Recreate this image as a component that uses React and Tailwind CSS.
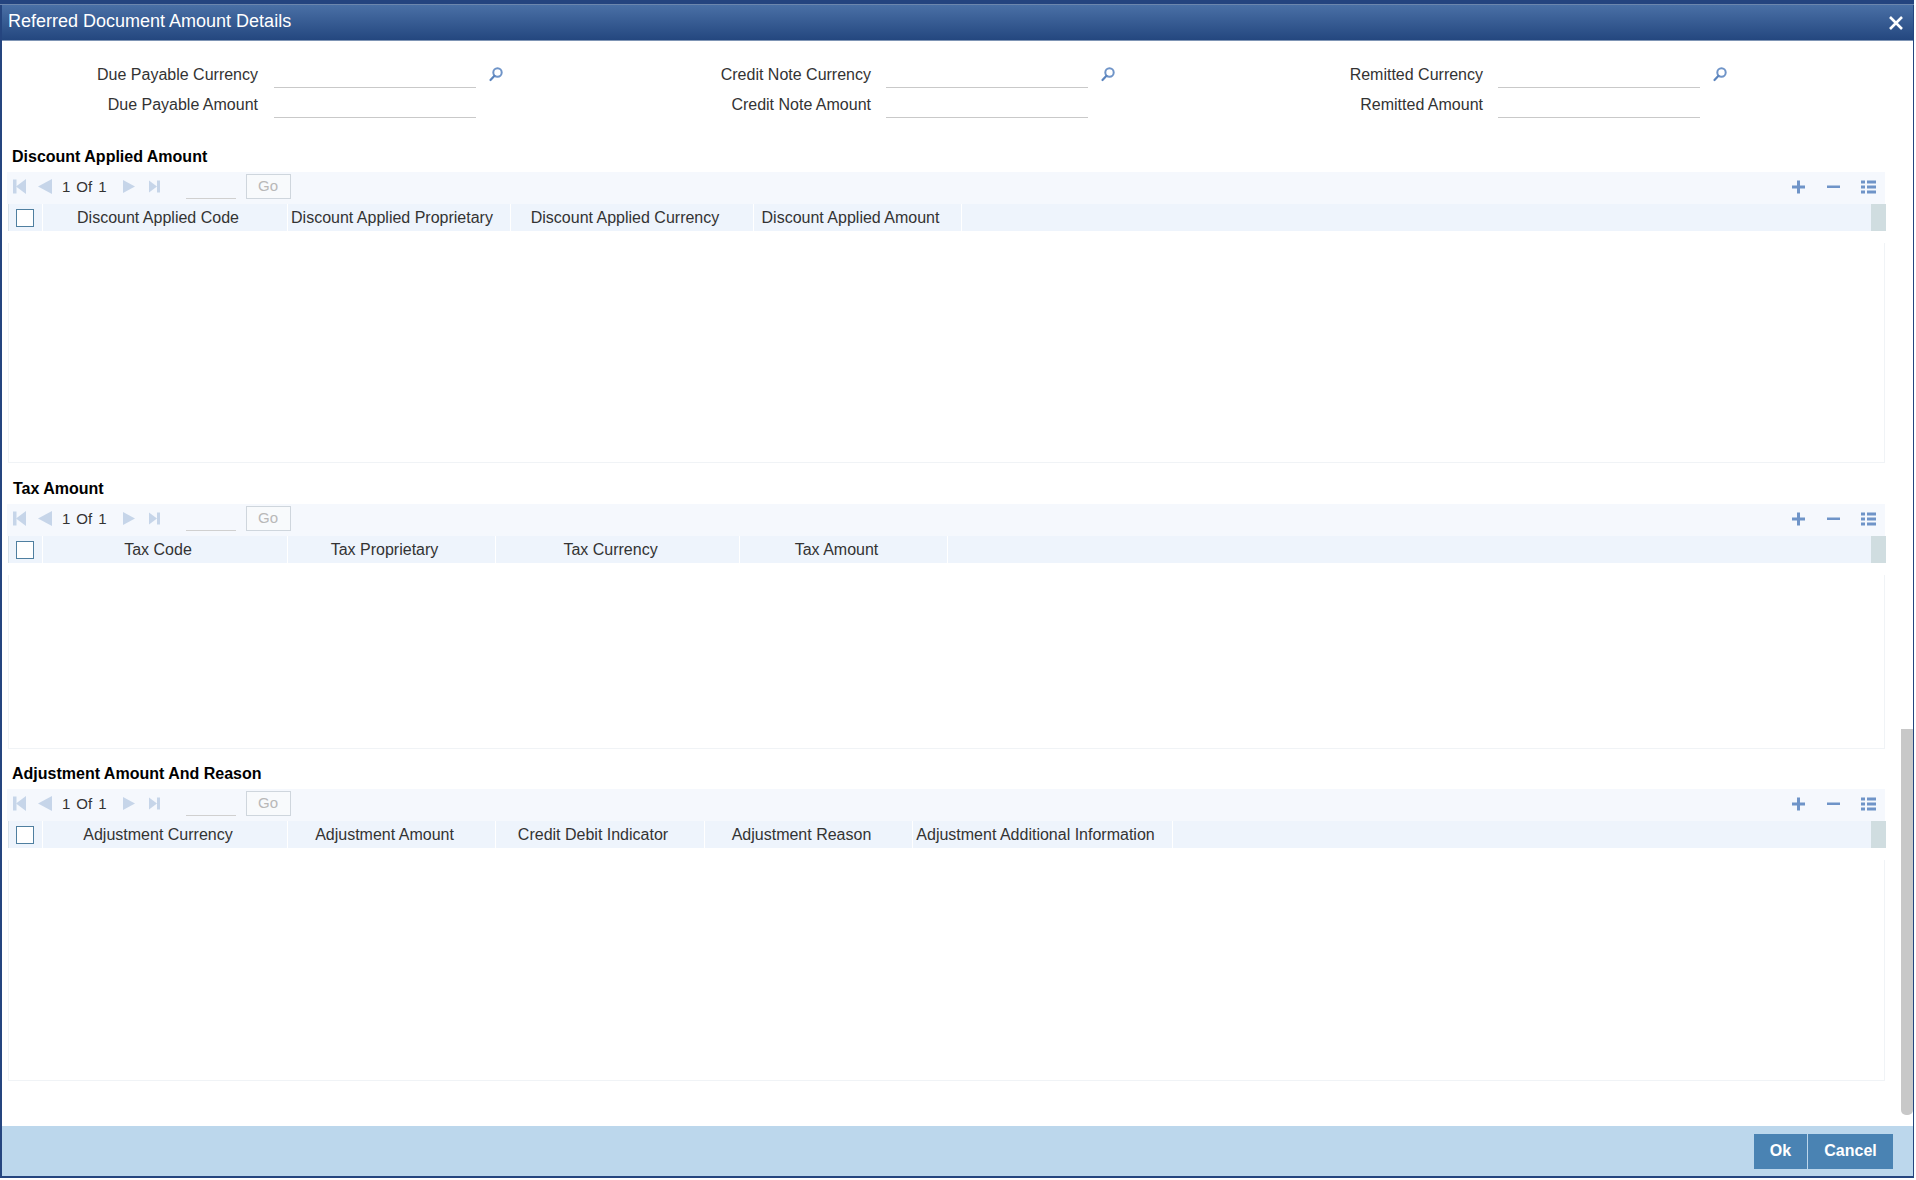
const F = "font-['Liberation_Sans',Arial,sans-serif]";

function Search() {
  return (
    <svg width="16" height="16" viewBox="0 0 16 16" fill="none" className="shrink-0">
      <circle cx="9.5" cy="6.5" r="4.2" stroke="#6f94c8" strokeWidth="2" />
      <path d="M6.5 9.8 L2.5 14" stroke="#5b84bd" strokeWidth="2.2" strokeLinecap="round" />
    </svg>
  );
}

function Field({ label, search, labelW = "w-[256px]", gap = "ml-[16px]" }) {
  return (
    <div className="flex items-start h-[30px]">
      <div className={`${labelW} pt-[1px] text-right text-[16px] leading-[24px] text-[#333]`}>{label}</div>
      <div className={`${gap} w-[202px] h-[26px] border-b border-[#c9c9c9]`} />
      {search && <div className="ml-[12px] mt-[4px]"><Search /></div>}
    </div>
  );
}

function Pager() {
  const c = "#c6d5e9";
  return (
    <div className="flex items-center h-[32px] bg-[#f5f8fd] pl-[6px] pb-[3px]">
      <svg width="39" height="15" viewBox="0 0 39 15" className="shrink-0">
        <rect x="0" y="0.5" width="3.5" height="14" fill={c} />
        <path d="M13 0 V15 L3 7.5 Z" fill={c} />
        <path d="M39 0 V15 L25 7.5 Z" fill={c} />
      </svg>
      <div className="ml-[10px] flex gap-[6px] text-[15px] leading-[20px] text-[#333]">
        <span>1</span>
        <span>Of</span>
        <span>1</span>
      </div>
      <svg width="37" height="13" viewBox="0 0 37 13" className="shrink-0 ml-[16px]">
        <path d="M0 0 V13 L12 6.5 Z" fill={c} />
        <path d="M26 0.5 V12.5 L34 6.5 Z" fill={c} />
        <rect x="34" y="0.5" width="3" height="12" fill={c} />
      </svg>
      <div className="ml-[26px] w-[50px] h-[27px] self-start border-b border-[#d0d0d0]" />
      <div className="ml-[10px] w-[45px] h-[25px] self-start mt-[2px] border border-[#cfd6dd] bg-[#f8fafc] flex items-center justify-center text-[15px] text-[#b8b8b8]">Go</div>
      <div className="flex-1" />
      <svg width="84" height="14" viewBox="0 0 84 14" className="mr-[9px] shrink-0" fill="#6f94c8">
        <rect x="0" y="5.5" width="13" height="3" />
        <rect x="5" y="0.5" width="3" height="13" />
        <rect x="35" y="5.5" width="13" height="2.5" />
        <rect x="69" y="0.5" width="4" height="3" />
        <rect x="75" y="0.5" width="9" height="3" />
        <rect x="69" y="5.5" width="4" height="3" />
        <rect x="75" y="5.5" width="9" height="3" />
        <rect x="69" y="10.5" width="4" height="3" />
        <rect x="75" y="10.5" width="9" height="3" />
      </svg>
    </div>
  );
}

function Section({ title, titleX, cols, bodyH, mt }) {
  return (
    <section className={mt}>
      <h2 className="font-bold text-[16px] leading-[20px] text-black" style={{ paddingLeft: titleX }}>{title}</h2>
      <div className="ml-[5px] mr-[28px] mt-[5px]">
        <Pager />
      </div>
      <div className="ml-[6px] mr-[27px] h-[27px] flex bg-[#eef4fc] border-l border-[#d8e2ea]">
        <div className="w-[34px] shrink-0 border-r border-white flex items-center justify-center pr-[1px]">
          <div className="w-[18px] h-[18px] bg-white border border-[#4f7fa0]" />
        </div>
        {cols.map(([t, w]) => (
          <div key={t} className="shrink-0 border-r border-white flex items-center justify-center pt-[1px] pr-[14px] text-[16px] text-[#333] whitespace-nowrap" style={{ width: w }}>{t}</div>
        ))}
        <div className="flex-1" />
        <div className="w-[15px] bg-[#d0dde0]" />
      </div>
      <div className="ml-[6px] mr-[28px] mt-[12px] border-l border-b border-r border-[#f0f3f6]" style={{ height: bodyH }} />
    </section>
  );
}

export default function App() {
  return (
    <div className={`${F} relative w-[1916px] h-[1180px] overflow-hidden bg-white`}>
      <div className="w-[1914px] h-[1178px] flex flex-col border-l-2 border-r border-b-2 border-[#25457f]">
        <div className="h-[5px] -ml-[2px] -mr-[1px] shrink-0 bg-[#24447f] border-b border-[#6c86ad]" />
        <header className="h-[36px] shrink-0 flex items-center justify-between bg-gradient-to-b from-[#4a70a6] to-[#24477f] border-b border-[#7f95b5] pl-[6px] pr-[9px]">
          <span className="text-[18px] text-white mb-[3px]">Referred Document Amount Details</span>
          <svg width="16" height="16" viewBox="0 0 16 16" stroke="white" strokeWidth="2.6">
            <path d="M2 2 L14 14 M14 2 L2 14" />
          </svg>
        </header>
        <main className="flex-1 relative">
          <div className="grid grid-cols-[612px_612px_612px] pt-[21px]">
            <div>
              <Field label="Due Payable Currency" search />
              <Field label="Due Payable Amount" />
            </div>
            <div>
              <Field label="Credit Note Currency" search labelW="w-[257px]" gap="ml-[15px]" />
              <Field label="Credit Note Amount" labelW="w-[257px]" gap="ml-[15px]" />
            </div>
            <div>
              <Field label="Remitted Currency" search labelW="w-[257px]" gap="ml-[15px]" />
              <Field label="Remitted Amount" labelW="w-[257px]" gap="ml-[15px]" />
            </div>
          </div>
          <Section
            mt="mt-[25px]"
            title="Discount Applied Amount"
            titleX={10}
            bodyH={220}
            cols={[["Discount Applied Code", 245], ["Discount Applied Proprietary", 223], ["Discount Applied Currency", 243], ["Discount Applied Amount", 208]]}
          />
          <Section
            mt="mt-[16px]"
            title="Tax Amount"
            titleX={11}
            bodyH={174}
            cols={[["Tax Code", 245], ["Tax Proprietary", 208], ["Tax Currency", 244], ["Tax Amount", 208]]}
          />
          <Section
            mt="mt-[15px]"
            title="Adjustment Amount And Reason"
            titleX={10}
            bodyH={221}
            cols={[["Adjustment Currency", 245], ["Adjustment Amount", 208], ["Credit Debit Indicator", 209], ["Adjustment Reason", 208], ["Adjustment Additional Information", 260]]}
          />
          <div className="absolute right-0 top-[688px] w-[12px] h-[386px] bg-[#c8c8c8] rounded-b-[5px]" />
        </main>
        <footer className="h-[50px] shrink-0 bg-[#bcd7ec] flex items-center justify-end pr-[20px]">
          <button className="w-[53px] h-[35px] bg-[#4a83b3] text-white font-bold text-[16px]">Ok</button>
          <button className="ml-[1px] w-[85px] h-[35px] bg-[#4a83b3] text-white font-bold text-[16px]">Cancel</button>
        </footer>
      </div>
    </div>
  );
}
